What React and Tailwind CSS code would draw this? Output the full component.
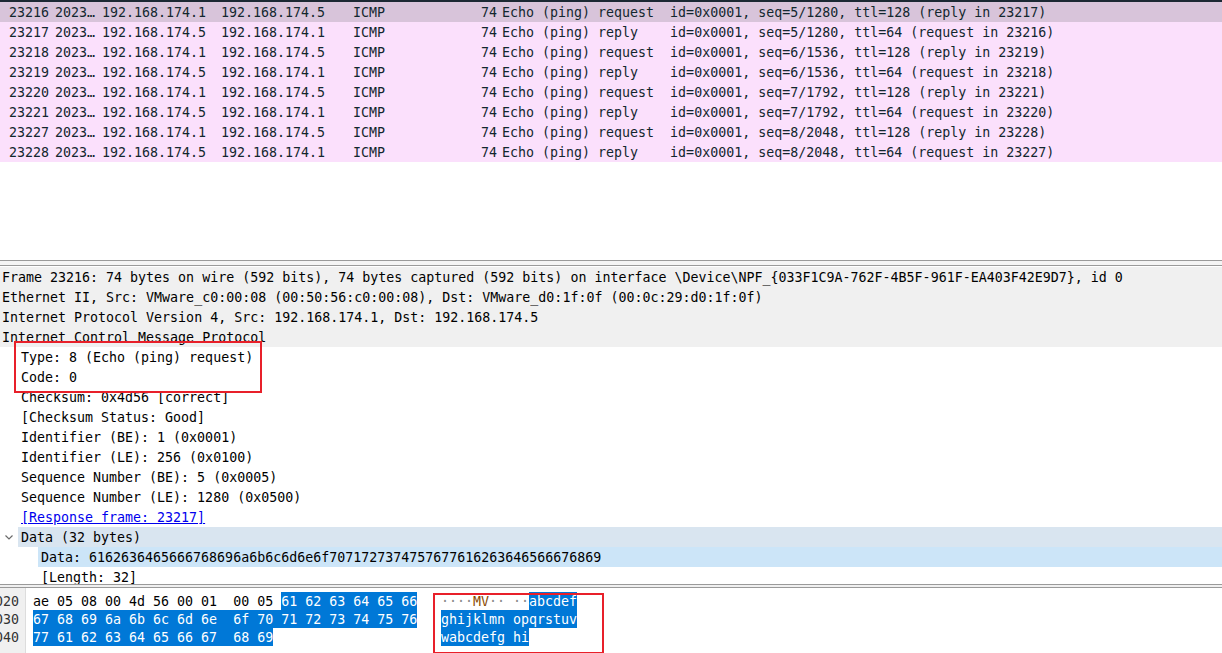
import { useState } from "react";

const packets = [
  { no: "23216", src: "192.168.174.1", dst: "192.168.174.5", info: "Echo (ping) request  id=0x0001, seq=5/1280, ttl=128 (reply in 23217)" },
  { no: "23217", src: "192.168.174.5", dst: "192.168.174.1", info: "Echo (ping) reply    id=0x0001, seq=5/1280, ttl=64 (request in 23216)" },
  { no: "23218", src: "192.168.174.1", dst: "192.168.174.5", info: "Echo (ping) request  id=0x0001, seq=6/1536, ttl=128 (reply in 23219)" },
  { no: "23219", src: "192.168.174.5", dst: "192.168.174.1", info: "Echo (ping) reply    id=0x0001, seq=6/1536, ttl=64 (request in 23218)" },
  { no: "23220", src: "192.168.174.1", dst: "192.168.174.5", info: "Echo (ping) request  id=0x0001, seq=7/1792, ttl=128 (reply in 23221)" },
  { no: "23221", src: "192.168.174.5", dst: "192.168.174.1", info: "Echo (ping) reply    id=0x0001, seq=7/1792, ttl=64 (request in 23220)" },
  { no: "23227", src: "192.168.174.1", dst: "192.168.174.5", info: "Echo (ping) request  id=0x0001, seq=8/2048, ttl=128 (reply in 23228)" },
  { no: "23228", src: "192.168.174.5", dst: "192.168.174.1", info: "Echo (ping) reply    id=0x0001, seq=8/2048, ttl=64 (request in 23227)" },
];

const headerRows = [
  "Frame 23216: 74 bytes on wire (592 bits), 74 bytes captured (592 bits) on interface \\Device\\NPF_{033F1C9A-762F-4B5F-961F-EA403F42E9D7}, id 0",
  "Ethernet II, Src: VMware_c0:00:08 (00:50:56:c0:00:08), Dst: VMware_d0:1f:0f (00:0c:29:d0:1f:0f)",
  "Internet Protocol Version 4, Src: 192.168.174.1, Dst: 192.168.174.5",
  "Internet Control Message Protocol",
];

const icmpFields = [
  "Type: 8 (Echo (ping) request)",
  "Code: 0",
  "Checksum: 0x4d56 [correct]",
  "[Checksum Status: Good]",
  "Identifier (BE): 1 (0x0001)",
  "Identifier (LE): 256 (0x0100)",
  "Sequence Number (BE): 5 (0x0005)",
  "Sequence Number (LE): 1280 (0x0500)",
];

function PacketRow({ p, selected }) {
  return (
    <div
      className={`flex h-[20px] leading-[22px] whitespace-pre text-[#12272e] ${
        selected ? "bg-[#d8c4da]" : "bg-[#fbe0fc]"
      }`}
    >
      <div className="w-[52px] text-right pr-[3px]">{p.no}</div>
      <div className="w-[47px] pl-[3px]">2023…</div>
      <div className="w-[119px] pl-[3px]">{p.src}</div>
      <div className="w-[132px] pl-[3px]">{p.dst}</div>
      <div className="w-[90px] pl-[3px]">ICMP</div>
      <div className="w-[59px] text-right pr-[2px]">74</div>
      <div className="pl-[3px]">{p.info}</div>
    </div>
  );
}

function Splitter() {
  return <div className="h-[6px] border-y border-[#9a9a9a] bg-[#f4f4f4]" />;
}

export default function App() {
  const [selected] = useState(0);
  const hl = "inline-block h-[18px] leading-[19px] align-top bg-[#0078d7] text-white";
  const dot = "text-[#8a8a8a]";
  const line = "h-[18px] leading-[19px]";

  return (
    <div
      className="w-[1222px] h-[653px] overflow-hidden bg-white flex flex-col text-[13.3px]"
      style={{ fontFamily: '"DejaVu Sans Mono", "Liberation Mono", monospace' }}
    >
      {/* top edge */}
      <div className="h-[2px] bg-[#1b2833]" />

      {/* packet list */}
      <div className="h-[258px] flex flex-col">
        {packets.map((p, i) => (
          <PacketRow key={p.no} p={p} selected={i === selected} />
        ))}
      </div>

      <Splitter />

      {/* packet details */}
      <div className="relative h-[318px] pt-[1px] overflow-hidden text-black whitespace-pre">
        <div className="bg-[#f0f0f0]">
          {headerRows.map((t) => (
            <div key={t} className="h-[20px] leading-[22px] pl-[2px]">
              {t}
            </div>
          ))}
        </div>
        {icmpFields.map((t) => (
          <div key={t} className="h-[20px] leading-[22px] pl-[21px]">
            {t}
          </div>
        ))}
        <div className="h-[20px] leading-[22px] pl-[21px]">
          <span className="text-[#0000ee] underline">[Response frame: 23217]</span>
        </div>
        <div className="flex h-[20px] leading-[22px]">
          <div className="w-[18px] flex items-center justify-center">
            <svg width="10" height="10" viewBox="0 0 10 10" fill="none" stroke="#6b6b6b" strokeWidth="1.2">
              <path d="M1.5 3.5 L5 7 L8.5 3.5" />
            </svg>
          </div>
          <div className="flex-1 bg-[#d9e5f0] pl-[3px]">Data (32 bytes)</div>
        </div>
        <div className="flex h-[20px] leading-[22px]">
          <div className="w-[38px]" />
          <div className="flex-1 bg-[#cce5f8] pl-[3px]">
            Data: 6162636465666768696a6b6c6d6e6f7071727374757677616263646566676869
          </div>
        </div>
        <div className="h-[20px] leading-[22px] pl-[41px]">[Length: 32]</div>

        {/* annotation box */}
        <div className="absolute left-[14px] top-[75px] w-[248px] h-[52px] border-2 border-[#e8202a]" />
      </div>

      <div className="h-[4px] border-y border-[#9a9a9a] bg-[#f0f0f0]" />

      {/* bytes pane */}
      <div className="flex-1 flex whitespace-pre text-black">
        <div className="w-[26px] bg-[#f0f0f0] border-r border-[#dddddd] pt-[4px]">
          {["0020", "0030", "0040"].map((o) => (
            <div key={o} className={`${line} flex justify-end pr-[6px] overflow-hidden text-[#333]`}>
              {o}
            </div>
          ))}
        </div>
        <div className="pt-[4px] pl-[7px] w-[391px]">
          <div className={line}>
            ae 05 08 00 4d 56 00 01  00 05 <span className={hl}>61 62 63 64 65 66</span>
          </div>
          <div className={line}>
            <span className={hl}>67 68 69 6a 6b 6c 6d 6e  6f 70 71 72 73 74 75 76</span>
          </div>
          <div className={line}>
            <span className={hl}>77 61 62 63 64 65 66 67  68 69</span>
          </div>
        </div>
        <div className="relative pt-[4px] ml-[24px]">
          <div className={line}>
            <span className={dot}>····</span>
            <span className="text-[#8a4a00]">MV</span>
            <span className={dot}>·· ··</span>
            <span className={hl}>abcdef</span>
          </div>
          <div className={line}>
            <span className={hl}>ghijklmn opqrstuv</span>
          </div>
          <div className={line}>
            <span className={hl}>wabcdefg hi</span>
          </div>

          {/* annotation box */}
          <div className="absolute -left-[8px] top-[5px] w-[171px] h-[61px] border-2 border-[#e8202a]" />
        </div>
      </div>
    </div>
  );
}
